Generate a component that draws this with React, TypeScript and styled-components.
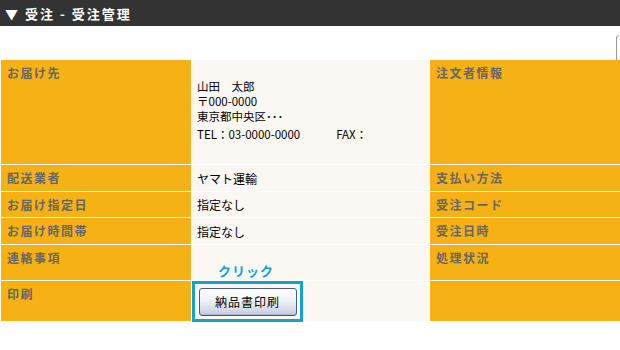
import styled, { createGlobalStyle } from 'styled-components';

const GlobalStyle = createGlobalStyle`
	body {
		margin: 0;
		background: #ffffff;
		font-family: "Noto Sans CJK JP", "Noto Sans", sans-serif;
	}
`;

const Page = styled.div`
	width: 620px;
	height: 350px;
	overflow: hidden;
	background: #ffffff;
`;

const TitleBar = styled.div`
	height: 26px;
	background: #333333;
	color: #ffffff;
	font-size: 13px;
	font-weight: bold;
	letter-spacing: 2px;
	display: flex;
	align-items: center;
	padding-left: 5px;
`;

const Spacer = styled.div`
	height: 34px;
	display: flex;
	justify-content: flex-end;
	align-items: flex-end;
`;

const PanelEdge = styled.div`
	width: 2px;
	height: 24px;
	margin-right: 1px;
	border-left: 1px solid #9a9a9a;
	border-top: 1px solid #bbbbbb;
	border-top-left-radius: 3px;
`;

const Grid = styled.div`
	display: grid;
	grid-template-columns: 190px 237px 190px;
	grid-template-rows: 104px 26px 25px 26px 35px 40px;
	gap: 1px;
	padding-left: 1px;
`;

const Label = styled.div`
	background: #f6b114;
	color: #666666;
	font-size: 12px;
	font-weight: bold;
	letter-spacing: 1.5px;
	line-height: 16px;
	padding: 5px 6px;
`;

const Value = styled.div<{ $align?: 'center' | 'end' }>`
	background: #fbf8f3;
	color: #000000;
	font-size: 12px;
	line-height: 15px;
	display: flex;
	flex-direction: column;
	justify-content: ${(p) => (p.$align === 'end' ? 'flex-end' : 'center')};
	padding-left: 5px;
`;

const Address = styled.div`
	padding-bottom: 4px;
	font-size: 11.5px;
`;

const TelLine = styled.div`
	margin-top: 3px;
	display: flex;
	gap: 36px;
`;

const ClickNote = styled.span`
	color: #159fd8;
	font-size: 13px;
	font-weight: bold;
	letter-spacing: 1px;
	padding: 0 0 2px 21px;
	text-shadow: 0 0 2px #ffffff, 0 0 2px #ffffff;
`;

const PrintCell = styled.div`
	background: #fbf8f3;
	position: relative;
`;

const Highlight = styled.div`
	position: absolute;
	left: 0;
	top: 0;
	width: 105px;
	height: 35px;
	border: 3px solid #0fa2d6;
	display: flex;
	align-items: center;
	justify-content: center;
	background: #fbf8f3;
`;

const PrintButton = styled.button`
	width: 98px;
	height: 28px;
	border: 1px solid #4c5b7a;
	border-radius: 3px;
	background: linear-gradient(#ffffff 0%, #eef1f6 45%, #c3cde0 100%);
	font-family: "Noto Sans CJK JP", sans-serif;
	font-size: 12px;
	letter-spacing: 1px;
	color: #000000;
	padding: 0;
	box-shadow: inset 0 -1px 0 #a9b5cc;
`;

export default function App() {
	return (
		<Page>
			<GlobalStyle />
			<TitleBar>▼ 受注 - 受注管理</TitleBar>
			<Spacer>
				<PanelEdge />
			</Spacer>
			<Grid>
				<Label>お届け先</Label>
				<Value>
					<Address>
						<div>山田　太郎</div>
						<div>〒000-0000</div>
						<div>東京都中央区･･･</div>
						<TelLine>
							<span>TEL：03-0000-0000</span>
							<span>FAX：</span>
						</TelLine>
					</Address>
				</Value>
				<Label>注文者情報</Label>

				<Label>配送業者</Label>
				<Value>ヤマト運輸</Value>
				<Label>支払い方法</Label>

				<Label>お届け指定日</Label>
				<Value>指定なし</Value>
				<Label>受注コード</Label>

				<Label>お届け時間帯</Label>
				<Value>指定なし</Value>
				<Label>受注日時</Label>

				<Label>連絡事項</Label>
				<Value $align="end">
					<ClickNote>クリック</ClickNote>
				</Value>
				<Label>処理状況</Label>

				<Label>印刷</Label>
				<PrintCell>
					<Highlight>
						<PrintButton>納品書印刷</PrintButton>
					</Highlight>
				</PrintCell>
				<Label />
			</Grid>
		</Page>
	);
}
